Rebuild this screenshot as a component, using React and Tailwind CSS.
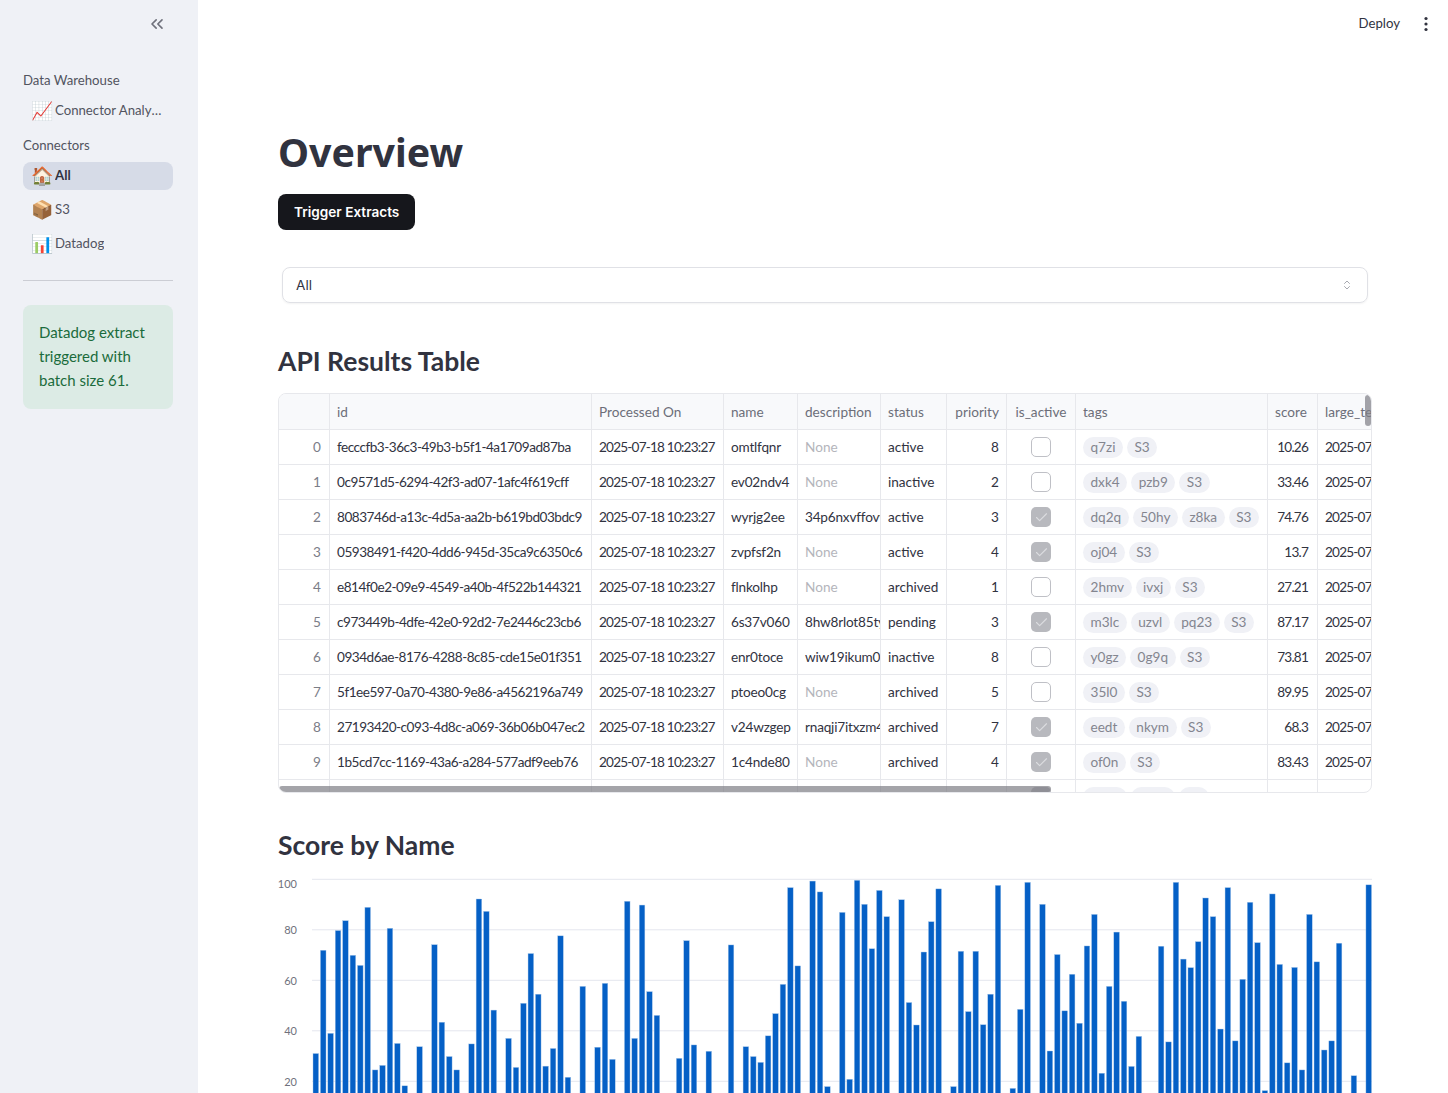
import { ChevronsLeft, ChevronsUpDown, Check } from "lucide-react";

const rows = [
  ["fecccfb3-36c3-49b3-b5f1-4a1709ad87ba", "omtlfqnr", null, "active", 8, false, ["q7zi", "S3"], "10.26"],
  ["0c9571d5-6294-42f3-ad07-1afc4f619cff", "ev02ndv4", null, "inactive", 2, false, ["dxk4", "pzb9", "S3"], "33.46"],
  ["8083746d-a13c-4d5a-aa2b-b619bd03bdc9", "wyrjg2ee", "34p6nxvffovyqk", "active", 3, true, ["dq2q", "50hy", "z8ka", "S3"], "74.76"],
  ["05938491-f420-4dd6-945d-35ca9c6350c6", "zvpfsf2n", null, "active", 4, true, ["oj04", "S3"], "13.7"],
  ["e814f0e2-09e9-4549-a40b-4f522b144321", "flnkolhp", null, "archived", 1, false, ["2hmv", "ivxj", "S3"], "27.21"],
  ["c973449b-4dfe-42e0-92d2-7e2446c23cb6", "6s37v060", "8hw8rlot85tyqk", "pending", 3, true, ["m3lc", "uzvl", "pq23", "S3"], "87.17"],
  ["0934d6ae-8176-4288-8c85-cde15e01f351", "enr0toce", "wiw19ikum0qkzt", "inactive", 8, false, ["y0gz", "0g9q", "S3"], "73.81"],
  ["5f1ee597-0a70-4380-9e86-a4562196a749", "ptoeo0cg", null, "archived", 5, false, ["35l0", "S3"], "89.95"],
  ["27193420-c093-4d8c-a069-36b06b047ec2", "v24wzgep", "rnaqji7itxzm4q", "archived", 7, true, ["eedt", "nkym", "S3"], "68.3"],
  ["1b5cd7cc-1169-43a6-a284-577adf9eeb76", "1c4nde80", null, "archived", 4, true, ["of0n", "S3"], "83.43"],
  ["7ad20c14-52be-4e19-b3f7-90c1de64a2b8", "k3mzp9xa", null, "archived", 6, true, ["hv2k", "t7rw", "S3"], "41.08"],
];

const scores = [
  31, 71.9, 39, 79.7, 83.6, 69.9, 65.9, 88.9, 24.5, 26.3, 80.6, 35, 18.2, 0, 33.7, 0, 74.1, 43.4, 29.8, 24.5,
  0, 34.8, 92.2, 87.3, 48.2, 0, 37, 25.5, 50.9, 70.6, 54.5, 26, 33, 77.6, 21.6, 0, 57.6, 0, 33.5, 58.8,
  28.7, 0, 91.3, 37, 89.8, 55.5, 46.1, 0, 0, 29.1, 75.7, 34.4, 0, 31.9, 0, 0, 74, 0, 33.7, 29.8,
  27.5, 38, 46.8, 58.4, 96.7, 65.7, 0, 99.3, 95, 17.9,
  0, 86.9, 20.8, 99.6, 90.1, 72.5, 95.6, 85.2, 0, 91.9, 51.2, 42.3, 71.2, 83.2, 96.2, 0, 17.9, 71.5, 47.6, 71.5,
  42.4, 54.5, 97.6, 0, 17.2, 48.5, 98.8, 0, 90.1, 32, 70.2, 47.9, 62.4, 43, 73.6, 86.1, 23.2, 57.6, 79.1, 51.7,
  25.9, 37.8, 0, 0, 73.5, 35.6, 98.8, 68.4, 65, 75.3, 92.6, 85.2, 40.7, 96.7, 36, 60.4, 90.9, 74.9, 16.3, 94.2,
  66.3, 27.3, 65.1, 24.5, 86.1, 67.3, 32.4, 36, 74.7, 0, 22.2, 0, 97.8,
];

const yOf = (v) => 9.3 + (100 - v) * 2.525;

const gridCols = "grid grid-cols-[51px_262px_132px_74px_83px_66px_60px_69px_192px_50px_200px]";
const cell = "border-r border-b border-[#e7e8ec] overflow-hidden whitespace-nowrap flex items-center";
const rowCell = cell;

const NavItem = ({ emoji, label, active }) => (
  <div
    className={`flex items-center h-[28px] pl-[8px] pr-[8px] rounded-lg text-[13.2px] ${
      active ? "bg-[#d6dbe7] font-bold text-[#31333f]" : "text-[#52545f]"
    }`}
  >
    <span className="w-[24px] text-[18px] leading-none shrink-0 mb-[2px]">{emoji}</span>
    <span className="truncate">{label}</span>
  </div>
);

const Sidebar = () => (
  <aside className="w-[198px] shrink-0 h-full bg-[#eff1f6] pl-[23px] pr-[25px]">
    <div className="h-[48px] flex items-center justify-end pr-[6px]">
      <ChevronsLeft size={20} strokeWidth={2} className="text-[#6f717c]" />
    </div>
    <div className="mt-[22px] text-[13.2px] leading-[20px] text-[#52545f]">Data Warehouse</div>
    <div className="mt-[7px]">
      <NavItem emoji="📈" label="Connector Analytics" />
    </div>
    <div className="mt-[10px] text-[13.2px] leading-[20px] text-[#52545f]">Connectors</div>
    <div className="mt-[7px] flex flex-col gap-[6px]">
      <NavItem emoji="🏠" label="All" active />
      <NavItem emoji="📦" label="S3" />
      <NavItem emoji="📊" label="Datadog" />
    </div>
    <div className="mt-[22px] border-t border-[#cbcdd4]" />
    <div className="mt-[24px] rounded-lg bg-[#dcebe5] px-[16px] pt-[15px] pb-[17px] text-[15px] leading-[24px] text-[#1b6b3c]">
      Datadog extract triggered with batch size 61.
    </div>
  </aside>
);

const Table = () => (
  <div className="relative h-[400px] w-[1094px] overflow-hidden rounded-lg border border-[#e7e8ec] text-[13.6px] text-[#31333f]">
    <div className={`${gridCols} h-[36px] bg-[#f8f9fb] text-[#6c6e79]`}>
      <div className={cell} />
      {["id", "Processed On", "name", "description", "status"].map((h) => (
        <div key={h} className={`${cell} pl-[7px] pt-[1px]`}>{h}</div>
      ))}
      <div className={`${cell} justify-end pr-[7px] pt-[1px]`}>priority</div>
      <div className={`${cell} justify-center pt-[1px]`}>is_active</div>
      <div className={`${cell} pl-[7px] pt-[1px]`}>tags</div>
      <div className={`${cell} pl-[7px] pt-[1px]`}>score</div>
      <div className={`${cell} pl-[7px] pt-[1px] border-r-0`}>large_text</div>
    </div>
    {rows.map((r, i) => (
      <div key={r[0]} className={`${gridCols} h-[35px]`}>
        <div className={`${rowCell} justify-end pr-[8px] text-[#7b7d87]`}>{i}</div>
        <div className={`${rowCell} pl-[7px] tracking-[-0.5px]`}>{r[0]}</div>
        <div className={`${rowCell} pl-[7px] tracking-[-0.8px]`}>2025-07-18 10:23:27</div>
        <div className={`${rowCell} pl-[7px] tracking-[-0.2px]`}>{r[1]}</div>
        <div className={`${rowCell} pl-[7px] ${r[2] ? "tracking-[-0.2px]" : "text-[#b4b5bb]"}`}>{r[2] || "None"}</div>
        <div className={`${rowCell} pl-[7px]`}>{r[3]}</div>
        <div className={`${rowCell} justify-end pr-[7px]`}>{r[4]}</div>
        <div className={`${cell} justify-center`}>
          {r[5] ? (
            <div className="w-[20px] h-[20px] rounded-[5px] bg-[#b8b9be] flex items-center justify-center">
              <Check size={15} strokeWidth={1.75} className="text-[#dcdde0]" />
            </div>
          ) : (
            <div className="w-[20px] h-[20px] rounded-[5px] border border-[#bfc0c6] bg-white" />
          )}
        </div>
        <div className={`${rowCell} pl-[7px] gap-[4px]`}>
          {r[6].map((t) => (
            <span key={t} className="h-[21px] px-[7.5px] rounded-full bg-[#f0f1f6] text-[#83858f] flex items-center">
              {t}
            </span>
          ))}
        </div>
        <div className={`${rowCell} justify-end pr-[9px] tracking-[-0.8px]`}>{r[7]}</div>
        <div className={`${rowCell} pl-[7px] border-r-0 tracking-[-0.8px]`}>2025-07-18 10:23:27</div>
      </div>
    ))}
    {/* overlay scrollbars */}
    <div className="absolute left-0 bottom-0 w-[772px] h-[6px] rounded-full bg-[#7d7e85]/70" />
    <div className="absolute right-0 top-[1px] w-[6px] h-[31px] rounded-full bg-[#7d7e85]/70" />
  </div>
);

const Chart = () => (
  <svg width="1094" height="300" className="block mt-[5px]" style={{ fontFamily: "Lato, sans-serif" }}>
    {[100, 80, 60, 40, 20].map((v) => (
      <g key={v}>
        <line x1="34" x2="1094" y1={yOf(v)} y2={yOf(v)} stroke="#e4e6ee" />
        <text x="19" y={v === 100 ? 18 : yOf(v) + 4.5} textAnchor="end" fontSize="11" fill="#6f717c">
          {v}
        </text>
      </g>
    ))}
    {scores.map((v, i) =>
      v ? (
        <rect
          key={i}
          x={35 + i * 7.415}
          y={yOf(v)}
          width="5.6"
          height={300 - yOf(v)}
          fill="#0560c6"
          stroke="#a9c8ea"
          strokeWidth="0.4"
        />
      ) : null
    )}
  </svg>
);

export default function App() {
  return (
    <div className="flex h-screen w-full overflow-hidden bg-white text-[#31333f] font-['Lato',sans-serif]">
      <Sidebar />
      <main className="relative flex-1 min-w-0 pl-[80px] pr-[76px] pt-[126px]">
        <div className="absolute top-[13px] right-[14px] flex items-center gap-[18px]">
          <span className="text-[13.2px] leading-[20px]">Deploy</span>
          <svg width="16" height="20" viewBox="0 0 16 20" fill="#31333f">
            <circle cx="8" cy="5.5" r="1.6" />
            <circle cx="8" cy="11" r="1.6" />
            <circle cx="8" cy="16.5" r="1.6" />
          </svg>
        </div>
        <h1 className="font-['Noto_Sans',sans-serif] text-[39.3px] leading-[52px] font-bold">Overview</h1>
        <button className="mt-[16px] block h-[36px] px-[16px] rounded-lg bg-[#16171c] text-white text-[13.6px] font-semibold font-['Inter',sans-serif]">
          Trigger Extracts
        </button>
        <div className="mt-[37px] ml-[4px] mr-[4px] h-[36px] flex items-center justify-between rounded-lg border border-[#e0e1e6] pl-[13px] pr-[14px] shadow-[0_1px_2px_rgba(0,0,0,0.05)] text-[13.6px] font-['Inter',sans-serif]">
          <span>All</span>
          <ChevronsUpDown size={12} strokeWidth={1.5} className="text-[#8a8c96]" />
        </div>
        <h2 className="mt-[38px] text-[26.5px] leading-[40px] font-bold">API Results Table</h2>
        <div className="mt-[12px]">
          <Table />
        </div>
        <h2 className="mt-[32px] text-[26.5px] leading-[40px] font-bold">Score by Name</h2>
        <Chart />
      </main>
    </div>
  );
}
